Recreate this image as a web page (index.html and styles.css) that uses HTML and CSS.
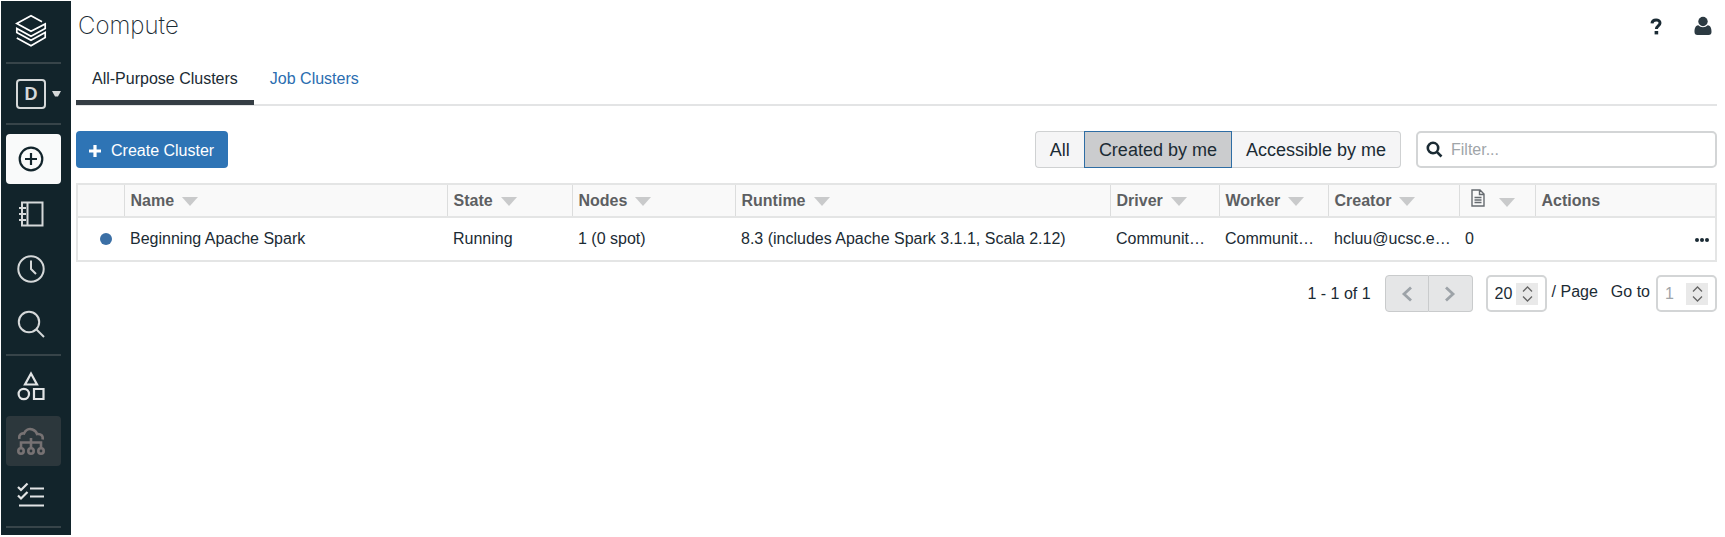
FILE: index.html
```html
<!DOCTYPE html>
<html lang="en">
<head>
<meta charset="utf-8">
<title>Compute</title>
<link rel="stylesheet" href="styles.css">
</head>
<body>
<div class="app">
  <nav class="sidebar" aria-label="Main">
    <a class="logo" href="#" aria-label="Home">
      <svg width="32" height="34" viewBox="0 0 32 34" fill="none" stroke="#fff" stroke-width="1.700"><path d="M27 7.800 16 1.800 1.800 9.500 16 17.300 30.200 10v4.500L16 22.300 1.800 14.500v4L16 26.200 30.200 18.500v5L16 31.800 1.800 24"/></svg>
    </a>
    <hr class="rule">
    <button class="persona" aria-label="Switch workspace">
      <span class="persona-box">D</span>
      <svg width="9" height="6" viewBox="0 0 9 6"><path d="M0 0h9L6 5.500H3z" fill="#d5d8d9"/></svg>
    </button>
    <hr class="rule">
    <button class="item item-create" aria-label="Create">
      <svg width="26" height="26" viewBox="0 0 26 26" fill="none" stroke="#12242b" stroke-width="2.200"><circle cx="13" cy="13" r="11.300"/><path d="M13 7v12M7 13h12"/></svg>
    </button>
    <button class="item" aria-label="Workspace">
      <svg width="26" height="26" viewBox="0 0 26 26" fill="none" stroke="#d5d8d9" stroke-width="2"><path d="M4 1.500h20.500v23H4zM9.500 1.500v23M1 7h7M1 13h7M1 19h7"/></svg>
    </button>
    <button class="item" aria-label="Recents">
      <svg width="28" height="28" viewBox="0 0 28 28" fill="none" stroke="#d5d8d9" stroke-width="2"><circle cx="14" cy="14" r="12.700"/><path d="M14 5.500V14l5 5"/></svg>
    </button>
    <button class="item" aria-label="Search">
      <svg width="28" height="28" viewBox="0 0 28 28" fill="none" stroke="#d5d8d9" stroke-width="2"><circle cx="12" cy="12" r="10.200"/><path d="m19 19 8 8"/></svg>
    </button>
    <hr class="rule">
    <button class="item" aria-label="Data">
      <svg width="28" height="30" viewBox="0 0 28 30" fill="none" stroke="#e2e4e5" stroke-width="2.200"><path d="M14 2.500 20 13.500H8z"/><circle cx="6.800" cy="23" r="5.200"/><path d="M17 18h9.500v10H17z"/></svg>
    </button>
    <button class="item item-current" aria-label="Compute">
      <svg width="28" height="28" viewBox="0 0 28 28" fill="none" stroke="#777273" stroke-width="2.600"><path d="M2.500 12C1.500 8 4 6 7 6.500 8.500 3 12 1 15.500 2.500 18 3.500 19.500 5 20 7c4-.5 6.500 2 5.500 5.500"/><path d="M14 11v10M4 21v-5.500h20V21"/><circle cx="4" cy="24" r="2.700"/><circle cx="14" cy="24" r="2.700"/><circle cx="24" cy="24" r="2.700"/></svg>
    </button>
    <button class="item" aria-label="Jobs">
      <svg width="28" height="28" viewBox="0 0 28 28" fill="none" stroke="#e2e4e5" stroke-width="2.200"><path d="m1 5 3 3 6.500-6.500M1 13.500l3 3 6.500-6.500M13 6.500h14M13 14.500h14M2 23.500h25"/></svg>
    </button>
    <hr class="rule">
  </nav>

  <main class="main">
    <header class="topbar">
      <h1 class="title">Compute</h1>
      <div class="top-actions">
        <button class="plain" aria-label="Help"><svg width="12" height="17" viewBox="0 0 12 17"><path d="M2 5.300C2.300 0.800 10 0.800 10 5c0 2.800-3.600 3-3.600 6" fill="none" stroke="#1b2b34" stroke-width="3"/><path d="M4.600 13h3.600v3.400H4.600z" fill="#1b2b34"/></svg></button>
        <button class="plain" aria-label="Account"><svg width="18" height="20" viewBox="0 0 18 20" fill="#2c3a42"><circle cx="9" cy="5.500" r="4.700"/><path d="M4.300 9.300C1 9.800.5 13 .5 16c0 2 1 3 3 3h11c2 0 3-1 3-3 0-3-.5-6.200-3.800-6.700-2.500 2.500-6.900 2.500-9.400 0z"/></svg></button>
      </div>
    </header>

    <div class="tabs">
      <a class="tab tab-active" href="#">All-Purpose Clusters</a>
      <a class="tab" href="#">Job Clusters</a>
    </div>

    <div class="toolbar">
      <button class="create"><svg width="14" height="14" viewBox="0 0 14 14"><path d="M7 1v12M1 7h12" stroke="#fff" stroke-width="3.200"/></svg>Create Cluster</button>
      <div class="filters">
        <div class="segments">
          <button class="segment">All</button>
          <button class="segment segment-on">Created by me</button>
          <button class="segment">Accessible by me</button>
        </div>
        <label class="search">
          <svg width="17" height="17" viewBox="0 0 17 17" fill="none" stroke="#1b2b34" stroke-width="2.600"><circle cx="7" cy="7" r="5.200"/><path d="m10.800 10.800 4.700 4.700"/></svg>
          <input class="search-input" type="text" placeholder="Filter..." aria-label="Filter">
        </label>
      </div>
    </div>

    <table class="clusters">
      <colgroup><col class="c-dot"><col class="c-name"><col class="c-state"><col class="c-nodes"><col class="c-runtime"><col class="c-type"><col class="c-type"><col class="c-creator"><col class="c-books"><col class="c-actions"></colgroup>
      <thead>
        <tr>
          <th></th>
          <th>Name<span class="sort"></span></th>
          <th>State<span class="sort"></span></th>
          <th>Nodes<span class="sort"></span></th>
          <th>Runtime<span class="sort"></span></th>
          <th>Driver<span class="sort"></span></th>
          <th>Worker<span class="sort"></span></th>
          <th>Creator<span class="sort"></span></th>
          <th class="books"><svg width="14" height="18" viewBox="0 0 14 18" fill="none" stroke="#666b70" stroke-width="1.400"><path d="M1 1h8l4 4v12H1zM8.500 1v4.500H13M3.500 8.500h7M3.500 11h7M3.500 13.500h7"/></svg><span class="sort"></span></th>
          <th>Actions</th>
        </tr>
      </thead>
      <tbody>
        <tr>
          <td class="status"><span class="dot"></span></td>
          <td>Beginning Apache Spark</td>
          <td>Running</td>
          <td>1 (0 spot)</td>
          <td>8.3 (includes Apache Spark 3.1.1, Scala 2.12)</td>
          <td>Communit…</td>
          <td>Communit…</td>
          <td>hcluu@ucsc.e…</td>
          <td>0</td>
          <td class="more"><button class="plain" aria-label="More actions"><svg width="14" height="4" viewBox="0 0 14 4" fill="#1b2b34"><circle cx="2" cy="2" r="2"/><circle cx="7" cy="2" r="2"/><circle cx="12" cy="2" r="2"/></svg></button></td>
        </tr>
      </tbody>
    </table>

    <div class="pager">
      <span class="count">1 - 1 of 1</span>
      <div class="pages">
        <button class="page" aria-label="Previous page" disabled><svg width="12" height="16" viewBox="0 0 12 16" fill="none" stroke="#9da3a8" stroke-width="2.800"><path d="m10 1.500-7 6.500 7 6.500"/></svg></button>
        <button class="page" aria-label="Next page" disabled><svg width="12" height="16" viewBox="0 0 12 16" fill="none" stroke="#9da3a8" stroke-width="2.800"><path d="m2 1.500 7 6.500-7 6.500"/></svg></button>
      </div>
      <span class="number">
        <input class="number-input" id="size" type="number" value="20">
        <svg class="spin" width="22" height="22" viewBox="0 0 22 22" fill="none" stroke="#666" stroke-width="1.300"><path d="m7 8.500 4.500-4.500L16 8.500M7 13.500l4.500 4.500 4.500-4.500"/></svg>
      </span>
      <label class="size-label" for="size">/ Page</label>
      <label class="goto-label" for="goto">Go to</label>
      <span class="number">
        <input class="number-input" id="goto" type="number" placeholder="1">
        <svg class="spin" width="22" height="22" viewBox="0 0 22 22" fill="none" stroke="#666" stroke-width="1.300"><path d="m7 8.500 4.500-4.500L16 8.500M7 13.500l4.500 4.500 4.500-4.500"/></svg>
      </span>
    </div>
  </main>
</div>
</body>
</html>
```

FILE: styles.css
```css
* { box-sizing: border-box; }

body {
  margin: 0;
  background: #fff;
  color: #1b2b34;
  font: 16px/20px "Liberation Sans", Arial, sans-serif;
}

button, input { font: inherit; color: inherit; }
button { margin: 0; padding: 0; border: 0; background: none; cursor: pointer; }
a { text-decoration: none; }
svg { display: block; flex: none; }

.app { display: flex; min-height: 100vh; }

/* Sidebar */
.sidebar {
  display: flex;
  flex-direction: column;
  gap: 5px;
  flex: none;
  width: 70px;
  margin: 1px 0 2px 1px;
  padding: 0 10px 6px 5px;
  background: #12242b;
}
.logo { display: flex; align-items: center; justify-content: center; height: 56px; padding: 4px 0 0; margin-right: 5px; }
.rule { width: 100%; height: 2px; margin: 0; border: 0; background: #374449; }
.persona { display: flex; align-items: center; gap: 6px; height: 49px; padding-left: 10px; }
.persona-box {
  width: 30px;
  height: 30px;
  border: 2px solid #d5d8d9;
  border-radius: 4px;
  color: #d5d8d9;
  font-weight: bold;
  font-size: 18px;
  line-height: 27px;
  text-align: center;
}
.item { display: flex; align-items: center; justify-content: center; height: 50px; padding-right: 5px; border-radius: 4px; }
.item-create { margin-top: 4px; background: #f9fafa; }
.item-current { background: #2c373c; }

/* Page */
.main { flex: 1; min-width: 0; padding: 0 8px 0 5px; }
.topbar { display: flex; align-items: center; justify-content: space-between; height: 52px; padding: 0 5px 0 2px; }
.title { margin: 0; font: 200 24px/32px Inter, "Liberation Sans", sans-serif; }
.top-actions { display: flex; align-items: center; gap: 32px; }

.tabs { display: flex; height: 54px; border-bottom: 2px solid #e3e4e5; }
.tab { height: 53px; padding: 17px 16px 0; color: #2a6db0; }
.tab-active { border-bottom: 5px solid #353d44; color: #1b2b34; }

.toolbar { display: flex; justify-content: space-between; padding: 25px 0 15px; }
.create {
  display: flex;
  align-items: center;
  gap: 9px;
  height: 37px;
  padding: 2px 14px 0 12px;
  border-radius: 4px;
  background: #2e74b5;
  color: #fff;
}
.filters { display: flex; gap: 15px; }
.segments { display: flex; }
.segment { height: 37px; padding: 1px 14px 0; border: 1px solid #cfd1d2; background: #f5f5f6; font-size: 18px; }
.segment:first-child { border-right: 0; border-radius: 4px 0 0 4px; }
.segment:last-child { border-left: 0; border-radius: 0 4px 4px 0; }
.segment-on { border-color: #2e6da4; background: #cbccce; }
.search {
  display: flex;
  align-items: center;
  gap: 8px;
  width: 301px;
  height: 37px;
  padding: 0 8px;
  border: 2px solid #d3d5d6;
  border-radius: 5px;
}
.search-input { flex: 1; min-width: 0; padding: 1px 0 0; border: 0; outline: 0; background: none; }
.search-input::placeholder { color: #a0a5a9; opacity: 1; }

/* Cluster table */
.clusters { width: 100%; table-layout: fixed; border-collapse: collapse; border: 2px solid #e4e5e5; }
.c-dot { width: 47px; }
.c-name { width: 323px; }
.c-state { width: 125px; }
.c-nodes { width: 163px; }
.c-runtime { width: 375px; }
.c-type { width: 109px; }
.c-creator { width: 131px; }
.c-books { width: 76px; }
.c-actions { width: auto; }
.clusters th {
  height: 33px;
  padding: 0 6px;
  border: 1px solid #dedfdf;
  border-width: 2px 1px;
  border-color: #e4e5e5 #dcdddd;
  background: #f9f9f9;
  color: #5d5f62;
  text-align: left;
  white-space: nowrap;
}
.clusters td {
  height: 44px;
  padding: 0 6px;
  overflow: hidden;
  text-overflow: ellipsis;
  white-space: nowrap;
}
.sort {
  display: inline-block;
  margin-left: 8px;
  border: 8px solid transparent;
  border-top: 9px solid #c9cacb;
  border-bottom: 0;
}
.clusters .books { padding-left: 11px; }
.books svg { display: inline-block; }
.books .sort { margin-left: 14px; }
.clusters .status { padding-left: 22px; }
.dot { display: block; width: 12px; height: 12px; border-radius: 50%; background: #3b6fa5; }
.clusters .more { text-align: right; }
.more .plain { display: inline-block; vertical-align: middle; }

/* Pager */
.pager { display: flex; align-items: center; justify-content: flex-end; padding-top: 13px; }
.count { margin-right: 14px; }
.pages { display: flex; margin-right: 13px; }
.page {
  display: flex;
  align-items: center;
  justify-content: center;
  width: 44px;
  height: 37px;
  border: 1px solid #c9cbcc;
  background: #e5e6e7;
}
.page:first-child { border-radius: 4px 0 0 4px; }
.page:last-child { border-left: 0; border-radius: 0 4px 4px 0; }
.number {
  display: flex;
  align-items: center;
  width: 61px;
  height: 37px;
  padding: 0 7px;
  border: 2px solid #d3d5d6;
  border-radius: 5px;
}
.number-input { flex: 1; width: 0; min-width: 0; padding: 0; border: 0; outline: 0; background: none; appearance: textfield; }
.number-input::-webkit-inner-spin-button { appearance: none; display: none; }
.number-input::placeholder { color: #a0a5a9; opacity: 1; }
.spin { background: #e9e9e9; }
.size-label { margin: 0 13px 3px 5px; }
.goto-label { margin: 0 6px 3px 0; }
```
